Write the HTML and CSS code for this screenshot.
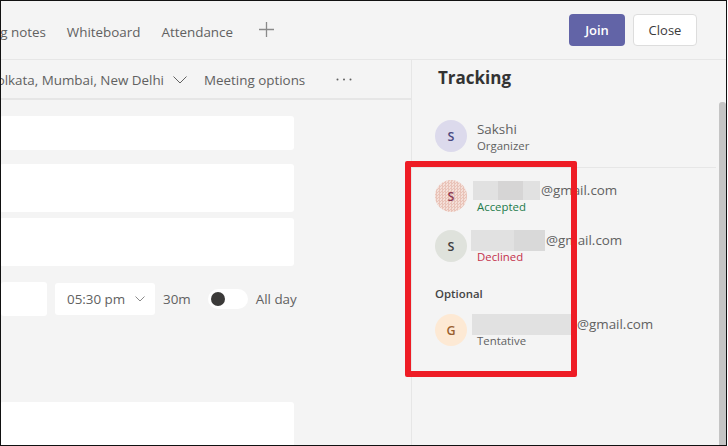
FILE: index.html
```html
<!DOCTYPE html>
<html lang="en">

<head>
    <meta charset="UTF-8">
    <title>Meeting details - Tracking</title>
    <link rel="stylesheet" href="styles.css">
</head>

<body>
    <div class="window">
        <header class="top-bar">
            <nav class="tabs">
                <span class="tab">Meeting notes</span>
                <span class="tab">Whiteboard</span>
                <span class="tab">Attendance</span>
                <svg class="add-tab" width="15" height="15" viewBox="0 0 15 15">
                    <path d="M7.500 0v15M0 7.500h15" stroke="#8a8a8a" stroke-width="1.300" fill="none" />
                </svg>
            </nav>
            <div class="top-actions">
                <button type="button" class="btn btn-join">Join</button>
                <button type="button" class="btn btn-close">Close</button>
            </div>
        </header>

        <div class="content">
            <main class="form-pane">
                <div class="options-bar">
                    <div class="timezone">
                        <span>(UTC+05:30) Chennai, Kolkata, Mumbai, New Delhi</span>
                    </div>
                    <svg class="tz-arrow" width="14" height="8" viewBox="0 0 14 8">
                        <path d="M.5.5 7 7 13.500.5" stroke="#616161" fill="none" />
                    </svg>
                    <span class="options-link">Meeting options</span>
                    <svg class="more" width="16" height="3" viewBox="0 0 16 3">
                        <circle cx="1.500" cy="1.500" r="1" fill="#616161" />
                        <circle cx="8" cy="1.500" r="1" fill="#616161" />
                        <circle cx="14.500" cy="1.500" r="1" fill="#616161" />
                    </svg>
                </div>

                <div class="form-body">
                    <div class="field field-title"></div>
                    <div class="field field-tall"></div>
                    <div class="field field-tall"></div>

                    <div class="time-row">
                        <div class="field date-field"></div>
                        <div class="field time-field">
                            <span>05:30 pm</span>
                            <svg width="10" height="6" viewBox="0 0 10 6">
                                <path d="M.5.5 5 5 9.500.5" stroke="#8a8a8a" fill="none" />
                            </svg>
                        </div>
                        <span class="duration">30m</span>
                        <div class="toggle"><span class="knob"></span></div>
                        <span class="all-day">All day</span>
                    </div>

                    <div class="field field-notes"></div>
                </div>
            </main>

            <aside class="tracking">
                <h2>Tracking</h2>

                <div class="person organizer">
                    <div class="avatar avatar-purple">S</div>
                    <div class="person-info">
                        <div class="person-name">Sakshi</div>
                        <div class="person-status">Organizer</div>
                    </div>
                </div>

                <div class="attendees">
                    <div class="person">
                        <div class="avatar avatar-red">S</div>
                        <div class="person-info">
                            <div class="person-name"><span class="redact redact-a"></span>@gmail.com</div>
                            <div class="person-status accepted">Accepted</div>
                        </div>
                    </div>
                    <div class="person">
                        <div class="avatar avatar-green">S</div>
                        <div class="person-info">
                            <div class="person-name"><span class="redact redact-b"></span>@gmail.com</div>
                            <div class="person-status declined">Declined</div>
                        </div>
                    </div>

                    <div class="optional-label">Optional</div>

                    <div class="person">
                        <div class="avatar avatar-orange">G</div>
                        <div class="person-info">
                            <div class="person-name"><span class="redact redact-c"></span>@gmail.com</div>
                            <div class="person-status">Tentative</div>
                        </div>
                    </div>
                </div>

                <div class="scrollbar"></div>
            </aside>
        </div>

        <div class="highlight-box"></div>
    </div>
</body>

</html>
```

FILE: styles.css
```css
:root {
    --background-color: #f4f4f4;
    --line-color: #e6e6e6;
    --text-color: #616161;
    --dark-text: #333333;
    --white-color: #ffffff;
    --primary-color: #6264a7;
}

* {
    box-sizing: border-box;
}

body {
    margin: 0;
    font-family: "Open Sans", "Noto Sans", Arial, sans-serif;
    font-size: 13.4px;
    color: var(--text-color);
    background-color: var(--white-color);
}

.window {
    position: relative;
    width: 727px;
    height: 446px;
    overflow: hidden;
    background-color: var(--background-color);
    border: 1px solid #111111;
    display: flex;
    flex-direction: column;
}

.top-bar {
    height: 59px;
    flex-shrink: 0;
    display: flex;
    justify-content: space-between;
    align-items: center;
    border-bottom: 1px solid var(--line-color);
    padding-right: 29px;
}

.tabs {
    width: 400px;
    display: flex;
    justify-content: flex-end;
    align-items: center;
    gap: 21px;
    padding-right: 127px;
    overflow: hidden;
    white-space: nowrap;
}

.tab {
    flex-shrink: 0;
    margin-top: 3px;
}

.add-tab {
    flex-shrink: 0;
    margin-left: 5px;
    margin-top: -2px;
}

.top-actions {
    display: flex;
    gap: 8px;
    margin-top: -1px;
}

.btn {
    height: 32px;
    border-radius: 4px;
    font-family: inherit;
    font-size: 13px;
}

.btn-join {
    width: 56px;
    border: none;
    background-color: var(--primary-color);
    color: var(--white-color);
    font-weight: 600;
}

.btn-close {
    width: 64px;
    border: 1px solid #dddddd;
    background-color: var(--white-color);
    color: #3b3b3b;
}

.content {
    flex-grow: 1;
    display: flex;
    min-height: 0;
}

.form-pane {
    width: 410px;
    flex-shrink: 0;
    display: flex;
    flex-direction: column;
}

.options-bar {
    height: 40px;
    flex-shrink: 0;
    display: flex;
    align-items: center;
    border-bottom: 2px solid var(--line-color);
    overflow: hidden;
    white-space: nowrap;
    padding-top: 1px;
}

.timezone {
    width: 163px;
    flex-shrink: 0;
    display: flex;
    justify-content: flex-end;
    overflow: hidden;
}

.timezone span {
    flex-shrink: 0;
}

.tz-arrow {
    margin-left: 9px;
    flex-shrink: 0;
}

.options-link {
    margin-left: 17px;
}

.more {
    margin-left: 31px;
    flex-shrink: 0;
}

.form-body {
    padding-top: 16px;
    display: flex;
    flex-direction: column;
}

.field {
    background-color: var(--white-color);
    border-radius: 3px;
}

.field-title {
    width: 294px;
    height: 34px;
    margin-left: -1px;
}

.field-tall {
    width: 294px;
    height: 48px;
    margin-left: -1px;
    margin-top: 14px;
}

.field-tall + .field-tall {
    margin-top: 6px;
}

.time-row {
    display: flex;
    align-items: center;
    margin-top: 16px;
    height: 34px;
}

.date-field {
    width: 46px;
    height: 34px;
}

.time-field {
    width: 100px;
    height: 32px;
    margin-left: 8px;
    padding: 0 10px 0 12px;
    display: flex;
    justify-content: space-between;
    align-items: center;
}

.duration {
    margin-left: 8px;
}

.toggle {
    width: 40px;
    height: 20px;
    margin-left: 17px;
    padding: 3px;
    border-radius: 10px;
    background-color: var(--white-color);
}

.knob {
    display: block;
    width: 14px;
    height: 14px;
    border-radius: 50%;
    background-color: #3b3a39;
}

.all-day {
    margin-left: 8px;
}

.field-notes {
    width: 294px;
    height: 60px;
    margin-left: -1px;
    margin-top: 86px;
}

.tracking {
    position: relative;
    flex-grow: 1;
    border-left: 1px solid var(--line-color);
}

.tracking h2 {
    margin: 5px 0 0 26px;
    font-size: 17px;
    font-weight: 700;
    line-height: 26px;
    color: var(--dark-text);
}

.person {
    display: flex;
    align-items: center;
    padding-left: 23px;
    height: 32px;
}

.organizer {
    margin-top: 29px;
}

.attendees {
    margin: 15px 10px 0 0;
    border-top: 1px solid var(--line-color);
    padding-top: 12px;
}

.attendees .person + .person {
    margin-top: 18px;
}

.avatar {
    width: 32px;
    height: 32px;
    flex-shrink: 0;
    border-radius: 50%;
    display: flex;
    justify-content: center;
    align-items: center;
    font-size: 12.5px;
    font-weight: 600;
}

.avatar-purple {
    background-color: #dcdaec;
    color: #4a4a7f;
}

/* the screenshot dithers this one */
.avatar-red {
    background: repeating-conic-gradient(#e9c3b8 0 25%, #f4dfd8 0 50%) 0 0 / 3px 3px;
    color: #8c3c52;
}

.avatar-green {
    background-color: #dfe2dc;
    color: #3f3f3f;
}

.avatar-orange {
    background-color: #fde9d4;
    color: #9a6030;
}

.person-info {
    margin-left: 10px;
    margin-top: 2px;
    line-height: 17px;
    white-space: nowrap;
}

.attendees .person-info {
    margin-top: 4px;
}

.person-name {
    display: flex;
    align-items: center;
    height: 17px;
}

.person-status {
    font-size: 11.4px;
    line-height: 15px;
}

.accepted {
    color: #237b4b;
}

.declined {
    color: #c4314b;
}

.redact {
    height: 19px;
    flex-shrink: 0;
    background-color: #e1e1e1;
}

.redact-a {
    width: 67px;
    margin-left: -4px;
    margin-right: 1px;
    background: linear-gradient(to right, #e1e1e1 37%, #d6d5d5 37%, #d6d5d5 74%, #e1e1e1 74%);
}

.redact-b {
    width: 74px;
    margin-left: -6px;
    margin-right: 1px;
    height: 21px;
    background: linear-gradient(to right, #e1e1e1 58%, #d9d9d9 58%);
}

.redact-c {
    width: 100px;
    margin-left: -5px;
    margin-right: 5px;
    height: 21px;
}

.optional-label {
    margin: 24px 0 13px 23px;
    font-size: 11.4px;
    font-weight: 600;
    line-height: 15px;
    color: #444444;
}

.scrollbar {
    position: absolute;
    top: 42px;
    right: 0;
    bottom: 0;
    width: 7px;
    border-radius: 3px 3px 0 0;
    background-color: #c4c4c4;
}

.highlight-box {
    position: absolute;
    left: 404px;
    top: 160px;
    width: 172px;
    height: 216px;
    border: 6px solid #ee1c25;
    border-radius: 2px;
}
```
